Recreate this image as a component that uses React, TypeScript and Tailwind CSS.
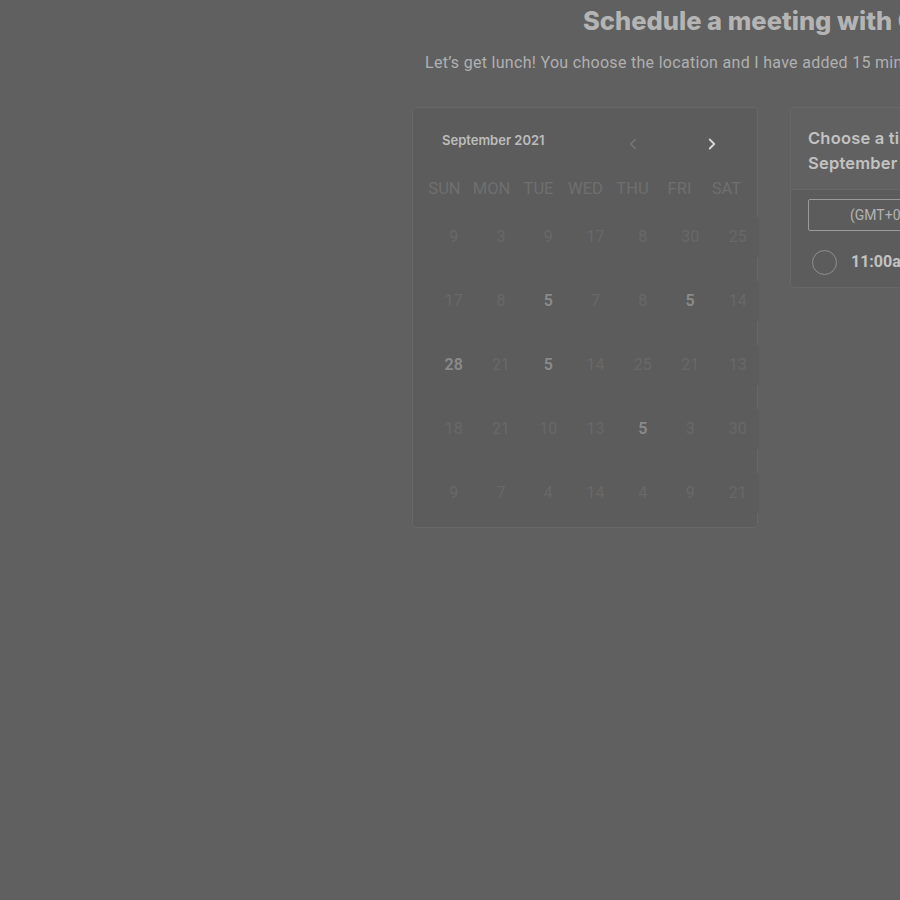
import { ChevronLeft, ChevronRight } from "lucide-react";

const weeks: { n: number; strong?: boolean }[][] = [
  [{ n: 9 }, { n: 3 }, { n: 9 }, { n: 17 }, { n: 8 }, { n: 30 }, { n: 25 }],
  [{ n: 17 }, { n: 8 }, { n: 5, strong: true }, { n: 7 }, { n: 8 }, { n: 5, strong: true }, { n: 14 }],
  [{ n: 28, strong: true }, { n: 21 }, { n: 5, strong: true }, { n: 14 }, { n: 25 }, { n: 21 }, { n: 13 }],
  [{ n: 18 }, { n: 21 }, { n: 10 }, { n: 13 }, { n: 5, strong: true }, { n: 3 }, { n: 30 }],
  [{ n: 9 }, { n: 7 }, { n: 4 }, { n: 14 }, { n: 4 }, { n: 9 }, { n: 21 }],
];

const days = ["SUN", "MON", "TUE", "WED", "THU", "FRI", "SAT"];

const Calendar = () => {
  return (
    <div className="w-[346px] h-[421px] shrink-0 rounded-[4px] border border-[#676767] bg-[#5c5c5c] font-['Roboto',sans-serif]">
      <div className="flex items-center h-[66px] pl-[29px] pr-[36px] pt-[6px]">
        <div className="font-['Inter',sans-serif] font-semibold text-[13px] text-[#bcbcbc] -mt-[6px]">September 2021</div>
        <div className="ml-auto flex items-center gap-[61px]">
          <ChevronLeft size={18} strokeWidth={2} className="text-[#777777]" />
          <ChevronRight size={18} strokeWidth={2.5} className="text-[#d4d4d4]" />
        </div>
      </div>
      <div className="grid grid-cols-7 w-[329px] ml-[8px] text-[16.5px] text-[#6f6f6f] leading-none">
        {days.map((d) => (
          <div key={d} className="text-center h-[30px] pt-[7px]">
            {d}
          </div>
        ))}
      </div>
      <div className="ml-[17px] w-[329px] pt-[13px] flex flex-col gap-[24px]">
        {weeks.map((w, i) => (
          <div key={i} className="grid grid-cols-[repeat(6,47.3px)_45px]">
            {w.map((c, j) => (
              <div
                key={j}
                className={
                  "h-[40px] flex items-center justify-center bg-[#5c5c5c] text-[16px] " +
                  (c.strong ? "font-semibold text-[#8a8a8a]" : "text-[#686868]") +
                  (j === 6 ? " pl-[3px]" : "")
                }
              >
                {c.n}
              </div>
            ))}
          </div>
        ))}
      </div>
    </div>
  );
};

const TimePanel = () => {
  return (
    <div className="w-[360px] shrink-0 rounded-[4px] border border-[#676767] bg-[#5c5c5c]">
      <div className="h-[82px] bg-[#616161] border-b border-[#676767] pl-[17px] pt-[18px] font-['Inter',sans-serif] font-semibold text-[16.5px] tracking-[0.2px] leading-[25px] text-[#c2c2c2]">
        <div>Choose a time on Tuesday,</div>
        <div>September 28, 2021</div>
      </div>
      <div className="px-[17px] pt-[9px]">
        <div className="h-[32px] rounded-[2px] border border-[#9a9a9a] flex items-center pl-[41px] font-['Roboto',sans-serif] text-[14px] text-[#b3b3b3]">
          (GMT+01:00) London
        </div>
        <div className="flex items-center h-[50px] mt-[6px] pl-[4px]">
          <div className="w-[25px] h-[25px] rounded-full border-[1.5px] border-[#8e8e8e]" />
          <div className="ml-[14px] font-['Roboto',sans-serif] font-bold text-[16px] text-[#c2c2c2]">11:00am</div>
        </div>
      </div>
    </div>
  );
};

export default function App() {
  return (
    <div className="w-screen h-screen overflow-hidden bg-[#606060]">
      <div className="w-[1300px] pt-[5px]">
        <h1 className="ml-[583px] font-['Inter',sans-serif] font-extrabold text-[25.5px] leading-[32px] text-[#b4b4b4] whitespace-nowrap">
          Schedule a meeting with Cindy
        </h1>
        <p className="ml-[425px] mt-[14px] font-['Roboto',sans-serif] text-[16px] tracking-[0.3px] leading-[24px] text-[#b0b0b0] whitespace-nowrap">
          Let’s get lunch! You choose the location and I have added 15 minutes of travel time.
        </p>
        <div className="ml-[412px] mt-[32px] flex items-start gap-[32px]">
          <Calendar />
          <TimePanel />
        </div>
      </div>
    </div>
  );
}
